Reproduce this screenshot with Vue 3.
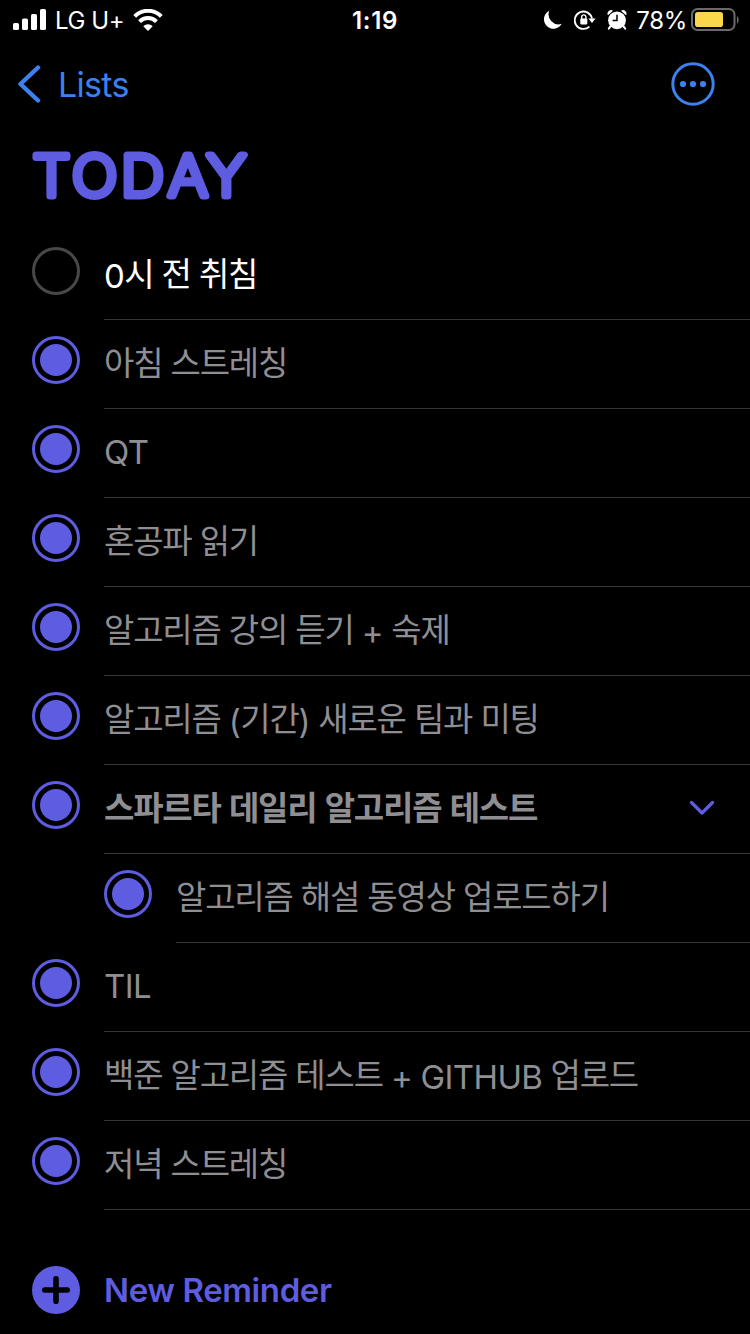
<script setup>
import { ref } from 'vue'

const reminders = ref([
  { id: 1, title: '0시 전 취침', done: false },
  { id: 2, title: '아침 스트레칭', done: true },
  { id: 3, title: 'QT', done: true },
  { id: 4, title: '혼공파 읽기', done: true },
  { id: 5, title: '알고리즘 강의 듣기 + 숙제', done: true },
  { id: 6, title: '알고리즘 (기간) 새로운 팀과 미팅', done: true },
  { id: 7, title: '스파르타 데일리 알고리즘 테스트', done: true, parent: true },
  { id: 8, title: '알고리즘 해설 동영상 업로드하기', done: true, child: true },
  { id: 9, title: 'TIL', done: true },
  { id: 10, title: '백준 알고리즘 테스트 + GITHUB 업로드', done: true },
  { id: 11, title: '저녁 스트레칭', done: true },
])

// Hangul and latin runs are tracked differently
function runs(title) {
  return title.match(/[가-힣 ]+|[^가-힣 ]+/g).map((text) => ({
    text,
    hangul: /[가-힣 ]/.test(text),
  }))
}
</script>

<template>
  <div class="screen">
    <header class="status">
      <div class="status__left">
        <svg class="status__signal" width="34" height="22" viewBox="0 0 34 22" fill="#fff">
          <rect x="0" y="14" width="6" height="7" rx="1.6" />
          <rect x="9" y="9.5" width="6" height="11.5" rx="1.6" />
          <rect x="18" y="5" width="6" height="16" rx="1.6" />
          <rect x="27" y="0" width="6" height="21" rx="1.6" />
        </svg>
        <span class="status__carrier">LG U+</span>
        <svg class="status__wifi" width="30" height="22" viewBox="0 0 30 22" fill="none" stroke="#fff">
          <path d="M1.7 7.3a18.8 18.8 0 0 1 26.6 0" stroke-width="4" />
          <path d="M6.6 12.6a11.8 11.8 0 0 1 16.8 0" stroke-width="4" />
          <path d="M10.3 17.3a6.6 6.6 0 0 1 9.4 0L15 22z" fill="#fff" stroke="none" />
        </svg>
      </div>
      <div class="status__time">1:19</div>
      <div class="status__right">
        <svg width="20" height="20" viewBox="0 0 20 20" fill="#fff">
          <path d="M6.3.7A9.5 9.5 0 1 0 18.8 13.8 10 10 0 0 1 6.3.7z" />
        </svg>
        <svg class="status__lock" width="22" height="20" viewBox="0 0 22 20" fill="none" stroke="#fff">
          <path d="M15.4 16.6A8.7 8.7 0 1 1 18 8.6" stroke-width="1.8" />
          <path d="M14.4 8.4h7.2L18 13z" fill="#fff" stroke="none" />
          <rect x="6.3" y="8.6" width="7" height="5.8" rx=".8" fill="#fff" stroke="none" />
          <path d="M7.7 9V7a2.1 2.1 0 0 1 4.2 0v2" stroke-width="1.4" />
        </svg>
        <svg class="status__alarm" width="20" height="20" viewBox="0 0 20 20" fill="#fff">
          <circle cx="10" cy="10.3" r="8.9" />
          <path d="M1 5.2A3.4 3.4 0 0 1 6 .8zM19 5.2A3.4 3.4 0 0 0 14 .8z" />
          <path d="M3.6 16.2 1.8 18.6M16.4 16.2l1.8 2.4" stroke="#fff" stroke-width="2" stroke-linecap="round" />
          <path d="M10 4.8v5.8H5.6" fill="none" stroke="#000" stroke-width="1.5" />
        </svg>
        <span class="status__percent">78%</span>
        <svg class="status__battery" width="48" height="24" viewBox="0 0 48 24">
          <rect x="1" y="1" width="42.5" height="21" rx="5.5" fill="none" stroke="#6a6a6a" stroke-width="2" />
          <rect x="4" y="4" width="28" height="15" rx="2.8" fill="#fbd84a" />
          <path d="M46 8c2.2 1.4 2.2 6.2 0 7.6z" fill="#6a6a6a" />
        </svg>
      </div>
    </header>

    <nav class="nav">
      <a class="nav__back">
        <svg width="24" height="40" viewBox="0 0 24 40" fill="none">
          <path d="M21 3.500 3.500 20 21 36.500" stroke="#3b82f0" stroke-width="4.400" stroke-linecap="round" stroke-linejoin="round" />
        </svg>
        <span>Lists</span>
      </a>
      <svg class="nav__more" width="44" height="44" viewBox="0 0 44 44" fill="#3b82f0">
        <circle cx="22" cy="22" r="20.2" fill="none" stroke="#3b82f0" stroke-width="3" />
        <circle cx="12" cy="22" r="3.1" />
        <circle cx="22" cy="22" r="3.1" />
        <circle cx="32" cy="22" r="3.1" />
      </svg>
    </nav>

    <!-- thin glyphs under a round-joined stroke give the rounded heading face -->
    <h1 class="title">
      <svg width="240" height="76" viewBox="0 0 240 76">
        <text x="0.65 37.4 83.2 127.3 163.3" y="56" transform="scale(1.07 1)">TODAY</text>
      </svg>
    </h1>

    <ul class="list">
      <li
        v-for="item in reminders"
        :key="item.id"
        class="item"
        :class="{ 'item--done': item.done, 'item--parent': item.parent, 'item--child': item.child }"
      >
        <span class="item__check"></span>
        <div class="item__body">
          <span class="item__title"><span
            v-for="(run, i) in runs(item.title)"
            :key="i"
            :class="run.hangul ? 'hangul' : 'latin'"
          >{{ run.text }}</span></span>
          <svg v-if="item.parent" class="item__chevron" width="26" height="16" viewBox="0 0 26 16" fill="none">
            <path d="M2.5 2.5 13 13 23.5 2.5" stroke="#5e5ce0" stroke-width="3.4" stroke-linecap="round" stroke-linejoin="round" />
          </svg>
        </div>
      </li>
    </ul>

    <footer class="add">
      <svg width="48" height="48" viewBox="0 0 48 48">
        <circle cx="24" cy="24" r="24" fill="#5e5ce0" />
        <path d="M24 12.8v22.4M12.8 24h22.4" stroke="#000" stroke-width="5.6" stroke-linecap="round" />
      </svg>
      <span>New Reminder</span>
    </footer>
  </div>
</template>

<style>
body {
  background: #000;
}
</style>

<style scoped>
.screen {
  width: 750px;
  height: 1334px;
  overflow: hidden;
  display: flex;
  flex-direction: column;
  background: #000;
  font-family: Inter, 'Noto Sans CJK KR', sans-serif;
}

.status {
  height: 40px;
  padding: 0 11px 0 13px;
  display: grid;
  grid-template-columns: 1fr auto 1fr;
  align-items: center;
  color: #fff;
  font-size: 24px;
  line-height: 40px;
}

.status__left,
.status__right {
  display: flex;
  align-items: center;
}

.status__right {
  justify-content: flex-end;
}

.status__signal {
  margin-right: 8px;
}

.status__carrier {
  margin-right: 9px;
  padding-top: 2px;
  line-height: 38px;
  letter-spacing: -0.4px;
}

.status__time {
  padding: 2px 2px 0 0;
  line-height: 38px;
  font-weight: 600;
  letter-spacing: 0.7px;
}

.status__lock {
  margin-left: 11px;
}

.status__alarm {
  margin-left: 11px;
}

.status__percent {
  margin-left: 9px;
  padding-top: 2px;
  line-height: 38px;
  letter-spacing: -0.3px;
}

.status__battery {
  margin-left: 4px;
}

.nav {
  height: 88px;
  padding: 0 35px 0 17px;
  display: flex;
  align-items: center;
  justify-content: space-between;
}

.nav__back {
  display: flex;
  align-items: center;
  gap: 17px;
  color: #3b82f0;
  font-size: 34px;
  letter-spacing: -0.7px;
}

.title {
  height: 76px;
  margin: 12px 0 15px 32px;
  display: flex;
}

.title text {
  font-family: Inter, sans-serif;
  font-size: 56px;
  font-weight: 200;
  fill: #5e5ce0;
  stroke: #5e5ce0;
  stroke-width: 7px;
  stroke-linejoin: round;
}

.list {
  margin: 0;
  padding: 0;
  list-style: none;
}

.item {
  height: 89px;
  padding-left: 32px;
  display: flex;
  gap: 24px;
}

.item--child {
  padding-left: 104px;
}

.item__check {
  width: 48px;
  height: 48px;
  margin-top: 16px;
  flex: none;
  box-sizing: border-box;
  border: 3px solid #48484a;
  border-radius: 50%;
}

.item--done .item__check {
  padding: 5px;
  border-color: #5e5ce0;
  background: #5e5ce0 content-box;
}

.item__body {
  flex: 1;
  padding: 0 35px 3px 0;
  display: flex;
  align-items: center;
  justify-content: space-between;
  border-bottom: 1px solid #363638;
}

.item__title {
  color: #fff;
  font-size: 33px;
  line-height: 48px;
  white-space: pre;
}

.item--done .item__title {
  color: #8e8e93;
}

.item--parent .item__title {
  font-weight: 600;
}

.hangul {
  font-family: 'Noto Sans CJK KR', sans-serif;
  letter-spacing: -1.2px;
  word-spacing: 2px;
  vertical-align: 2px;
}

.latin {
  letter-spacing: -0.6px;
}

.add {
  padding: 56px 0 0 32px;
  display: flex;
  align-items: center;
  gap: 24px;
  color: #5e5ce0;
  font-size: 33px;
  font-weight: 600;
  letter-spacing: -0.4px;
}
</style>
